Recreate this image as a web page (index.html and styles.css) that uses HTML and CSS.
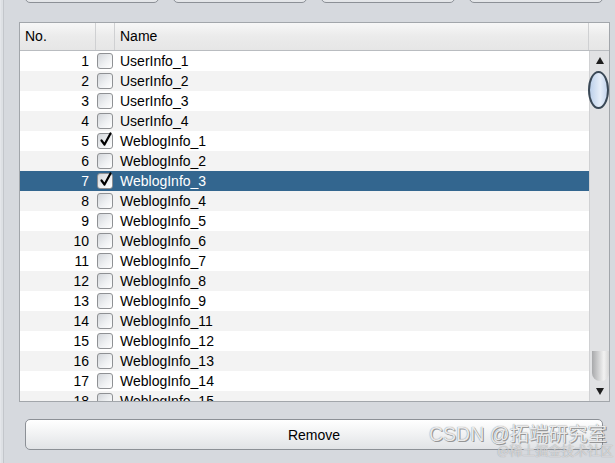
FILE: index.html
```html
<!DOCTYPE html>
<html>
<head>
<meta charset="utf-8">
<link rel="stylesheet" href="styles.css">
</head>
<body>
<div class="window">
  <div class="toolbar">
    <div class="tbtn"></div><div class="tbtn"></div><div class="tbtn"></div><div class="tbtn"></div>
  </div>
  <div class="table">
    <div class="thead">
      <div class="th th-no">No.</div>
      <div class="th th-chk"></div>
      <div class="th th-name">Name</div>
      <div class="th th-corner"></div>
    </div>
    <div class="tbody">
      <div class="rows">
        <div class="row"><span class="num">1</span><span class="cb"></span><span class="nm">UserInfo_1</span></div>
        <div class="row alt"><span class="num">2</span><span class="cb"></span><span class="nm">UserInfo_2</span></div>
        <div class="row"><span class="num">3</span><span class="cb"></span><span class="nm">UserInfo_3</span></div>
        <div class="row alt"><span class="num">4</span><span class="cb"></span><span class="nm">UserInfo_4</span></div>
        <div class="row"><span class="num">5</span><span class="cb checked"><svg viewBox="0 0 16 16" class="tick"><path d="M3.5 8.5 L6.5 12.5 L12.5 1.5" /></svg></span><span class="nm">WeblogInfo_1</span></div>
        <div class="row alt"><span class="num">6</span><span class="cb"></span><span class="nm">WeblogInfo_2</span></div>
        <div class="row sel"><span class="num">7</span><span class="cb checked"><svg viewBox="0 0 16 16" class="tick"><path d="M3.5 8.5 L6.5 12.5 L12.5 1.5" /></svg></span><span class="nm">WeblogInfo_3</span></div>
        <div class="row alt"><span class="num">8</span><span class="cb"></span><span class="nm">WeblogInfo_4</span></div>
        <div class="row"><span class="num">9</span><span class="cb"></span><span class="nm">WeblogInfo_5</span></div>
        <div class="row alt"><span class="num">10</span><span class="cb"></span><span class="nm">WeblogInfo_6</span></div>
        <div class="row"><span class="num">11</span><span class="cb"></span><span class="nm">WeblogInfo_7</span></div>
        <div class="row alt"><span class="num">12</span><span class="cb"></span><span class="nm">WeblogInfo_8</span></div>
        <div class="row"><span class="num">13</span><span class="cb"></span><span class="nm">WeblogInfo_9</span></div>
        <div class="row alt"><span class="num">14</span><span class="cb"></span><span class="nm">WeblogInfo_11</span></div>
        <div class="row"><span class="num">15</span><span class="cb"></span><span class="nm">WeblogInfo_12</span></div>
        <div class="row alt"><span class="num">16</span><span class="cb"></span><span class="nm">WeblogInfo_13</span></div>
        <div class="row"><span class="num">17</span><span class="cb"></span><span class="nm">WeblogInfo_14</span></div>
        <div class="row alt"><span class="num">18</span><span class="cb"></span><span class="nm">WeblogInfo_15</span></div>
      </div>
      <div class="vscroll">
        <div class="sb-up"><svg viewBox="0 0 10 10" class="arrow"><path d="M1 8 L5 1 L9 8 Z"/></svg></div>
        <div class="sb-thumb"></div>
        <div class="sb-track"></div>
        <div class="sb-end"></div>
        <div class="sb-down"><svg viewBox="0 0 10 10" class="arrow"><path d="M1 2 L5 9 L9 2 Z"/></svg></div>
      </div>
    </div>
  </div>
  <div class="footer">
    <button class="remove">Remove</button>
  </div>
  <div class="watermark">
    <div class="wm1">CSDN @拓端研究室</div>
    <div class="wm2">@稀土掘金技术社区</div>
  </div>
</div>
</body>
</html>
```

FILE: styles.css
```css
html, body {
  margin: 0;
  padding: 0;
}
body {
  width: 615px;
  height: 463px;
  overflow: hidden;
  background: #d6d9de;
  font-family: "Liberation Sans", Arial, sans-serif;
  font-size: 14px;
  color: #000;
}
.window {
  display: flow-root;
  position: relative;
  height: 463px;
  padding-left: 18px;
  box-sizing: border-box;
  border-left: 1px solid #e4e6ea;
  box-shadow: inset 2px 0 0 #dde0e4, inset 3px 0 0 #c3c6cb;
}
.toolbar {
  display: flex;
  justify-content: space-between;
  width: 578px;
  margin-left: 6px;
  margin-top: -27px;
  height: 30px;
}
.tbtn {
  width: 134px;
  height: 30px;
  box-sizing: border-box;
  border: 1px solid #8c9096;
  border-radius: 5px;
  background: linear-gradient(#ffffff, #e3e5e8);
}
.table {
  margin-top: 19px;
  width: 591px;
  box-sizing: border-box;
  border: 1px solid #a2a6ab;
  background: #fff;
}
.thead {
  display: flex;
  height: 28px;
  box-sizing: border-box;
  border-bottom: 1px solid #b9bcc0;
  background: linear-gradient(#f7f7f7, #ebebeb 50%, #e6e6e6);
}
.th {
  box-sizing: border-box;
  height: 27px;
  line-height: 27px;
  border-right: 1px solid #cfd0d2;
}
.th-no {
  width: 76px;
  padding-left: 5px;
}
.th-chk {
  width: 19px;
}
.th-name {
  flex: 1;
  padding-left: 5px;
}
.th-corner {
  width: 20px;
  border-right: none;
}
.tbody {
  display: flex;
  height: 350px;
}
.rows {
  flex: 1;
  overflow: hidden;
}
.row {
  display: flex;
  align-items: center;
  height: 20px;
  background: #fff;
}
.row.alt {
  background: #f3f3f3;
}
.row.sel {
  background: #33668f;
  color: #fff;
}
.num {
  width: 76px;
  box-sizing: border-box;
  text-align: right;
  padding-right: 7px;
}
.cb {
  position: relative;
  width: 16px;
  height: 16px;
  box-sizing: border-box;
  margin-left: 1px;
  border: 1px solid #8f9194;
  border-radius: 3px;
  background: linear-gradient(135deg, #d3d6da, #eef0f2 55%, #ffffff);
}
.tick {
  position: absolute;
  left: 0;
  top: -2px;
  width: 16px;
  height: 16px;
  overflow: visible;
}
.tick path {
  fill: none;
  stroke: #000;
  stroke-width: 2.2;
  stroke-linecap: round;
  stroke-linejoin: round;
}
.nm {
  padding-left: 7px;
  white-space: nowrap;
}
.vscroll {
  width: 20px;
  display: flex;
  flex-direction: column;
  background: #e1e2e4;
  border-left: 1px solid #d0d1d3;
  box-sizing: border-box;
}
.sb-up, .sb-down {
  height: 20px;
  display: flex;
  align-items: center;
  justify-content: center;
}
.arrow {
  width: 10px;
  height: 10px;
}
.arrow path {
  fill: #1e1e1e;
}
.sb-thumb {
  height: 38px;
  margin-left: -2px;
  box-sizing: border-box;
  border: 2px solid #3a4856;
  border-radius: 50%;
  background: linear-gradient(90deg, #bcd0ea, #e6eef9 60%, #c5d5ec);
}
.sb-track {
  flex: 1;
}
.sb-end {
  height: 30px;
  margin-left: 2px;
  border-radius: 0 0 8px 8px;
  background: linear-gradient(90deg, #a8a9ab, #f2f2f2 70%, #d6d6d6);
}
.footer {
  margin-top: 17px;
  margin-left: 6px;
  width: 578px;
}
.remove {
  display: block;
  width: 100%;
  height: 31px;
  box-sizing: border-box;
  border: 1px solid #8c9096;
  border-radius: 5px;
  background: linear-gradient(#ffffff, #f2f3f4 45%, #e1e3e6);
  font-family: "Liberation Sans", Arial, sans-serif;
  font-size: 14px;
  color: #000;
  padding: 0;
}
.watermark {
  position: absolute;
  left: 428px;
  top: 422px;
  width: 190px;
  pointer-events: none;
}
.wm1 {
  font-family: "Liberation Sans", "Noto Sans CJK SC", sans-serif;
  font-size: 19.5px;
  line-height: 24px;
  color: rgba(255, 255, 255, 0.85);
  text-shadow: 0 0 1px #6d6f73, 1px 1px 0 rgba(100, 100, 100, 0.6);
  white-space: nowrap;
}
.wm2 {
  margin-left: 68px;
  margin-top: -4px;
  font-family: "Noto Sans CJK SC", sans-serif;
  font-size: 13px;
  line-height: 16px;
  color: rgba(240, 240, 240, 0.7);
  text-shadow: 0 0 1px #8a8c90;
  white-space: nowrap;
}
```
